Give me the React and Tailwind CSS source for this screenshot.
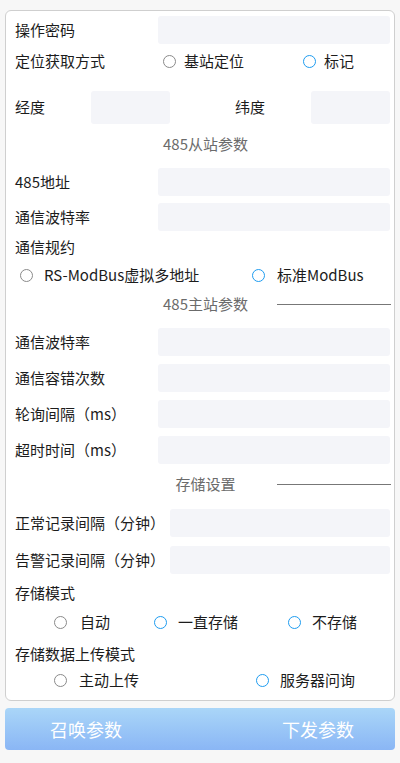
import React from "react";

const font = { fontFamily: '"Noto Sans CJK SC", "Noto Sans", sans-serif' };

function Radio({ blue }) {
  return (
    <span
      className={
        "inline-block w-[13px] h-[13px] rounded-full border bg-white shrink-0 " +
        (blue ? "border-[#1e9cf0]" : "border-[#8a8a8a]")
      }
    />
  );
}

function InputRow({ label, w = "w-[232px]", mt = "mt-[7px]" }) {
  return (
    <div className={"flex items-center justify-between " + mt}>
      <span className="text-[15px] text-[#1c1c1c]">{label}</span>
      <div className={"h-[28px] rounded-[3px] bg-[#f4f5f9] " + w} />
    </div>
  );
}

function Section({ title, line, h = "h-[34px]" }) {
  return (
    <div className={"relative flex items-center justify-center pl-[6px] " + h}>
      <span className="text-[15px] text-[#6b6b6b]">{title}</span>
      {line && (
        <div className="absolute right-[-1px] left-[262px] top-1/2 border-t border-[#777]" />
      )}
    </div>
  );
}

export default function App() {
  return (
    <div className="min-h-[763px] bg-[#f7f7f7] pt-[10px] pb-[13px]" style={font}>
      <div className="mx-[5px] rounded-[6px] border border-[#cfcfcf] bg-white pl-[9px] pr-[4px] pt-[5px] pb-[7px]">
        <InputRow label="操作密码" mt="mt-0" />

        <div className="flex items-center h-[30px] mt-[2px]">
          <span className="text-[15px] text-[#1c1c1c] w-[148px]">定位获取方式</span>
          <div className="flex items-center gap-[8px] w-[140px]">
            <Radio />
            <span className="text-[15px] text-[#1c1c1c]">基站定位</span>
          </div>
          <div className="flex items-center gap-[8px]">
            <Radio blue />
            <span className="text-[15px] text-[#1c1c1c]">标记</span>
          </div>
        </div>

        <div className="flex items-center mt-[15px]">
          <span className="text-[15px] text-[#1c1c1c] w-[76px]">经度</span>
          <div className="h-[33px] w-[79px] rounded-[3px] bg-[#f4f5f9]" />
          <span className="text-[15px] text-[#1c1c1c] ml-[65px] w-[76px]">纬度</span>
          <div className="h-[33px] w-[79px] rounded-[3px] bg-[#f4f5f9]" />
        </div>

        <Section title="485从站参数" h="h-[40px]" />

        <InputRow label="485地址" mt="mt-[4px]" />
        <InputRow label="通信波特率" />

        <div className="flex items-center h-[26px] mt-[3px]">
          <span className="text-[15px] text-[#1c1c1c]">通信规约</span>
        </div>
        <div className="flex items-center h-[30px]">
          <div className="flex items-center gap-[11px] pl-[5px] w-[237px]">
            <Radio />
            <span className="text-[15px] text-[#1c1c1c]">RS-ModBus虚拟多地址</span>
          </div>
          <div className="flex items-center gap-[12px]">
            <Radio blue />
            <span className="text-[15px] text-[#1c1c1c]">标准ModBus</span>
          </div>
        </div>

        <Section title="485主站参数" line h="h-[28px]" />

        <InputRow label="通信波特率" mt="mt-[10px]" />
        <InputRow label="通信容错次数" mt="mt-[8px]" />
        <InputRow label="轮询间隔（ms）" mt="mt-[8px]" />
        <InputRow label="超时时间（ms）" mt="mt-[8px]" />

        <Section title="存储设置" line h="h-[40px]" />

        <InputRow label="正常记录间隔（分钟）" w="w-[220px]" mt="mt-[5px]" />
        <InputRow label="告警记录间隔（分钟）" w="w-[220px]" mt="mt-[9px]" />

        <div className="flex items-center h-[26px] mt-[6px]">
          <span className="text-[15px] text-[#1c1c1c]">存储模式</span>
        </div>
        <div className="flex items-center h-[32px] pl-[39px]">
          <div className="flex items-center gap-[13px] w-[100px]">
            <Radio />
            <span className="text-[15px] text-[#1c1c1c]">自动</span>
          </div>
          <div className="flex items-center gap-[11px] w-[134px]">
            <Radio blue />
            <span className="text-[15px] text-[#1c1c1c]">一直存储</span>
          </div>
          <div className="flex items-center gap-[11px]">
            <Radio blue />
            <span className="text-[15px] text-[#1c1c1c]">不存储</span>
          </div>
        </div>

        <div className="flex items-center h-[26px] mt-[3px]">
          <span className="text-[15px] text-[#1c1c1c]">存储数据上传模式</span>
        </div>
        <div className="flex items-center h-[26px] pl-[39px]">
          <div className="flex items-center gap-[12px] w-[202px]">
            <Radio />
            <span className="text-[15px] text-[#1c1c1c]">主动上传</span>
          </div>
          <div className="flex items-center gap-[11px]">
            <Radio blue />
            <span className="text-[15px] text-[#1c1c1c]">服务器问询</span>
          </div>
        </div>
      </div>

      <div className="mx-[5px] mt-[7px] h-[42px] rounded-[4px] bg-gradient-to-b from-[#aad6f8] to-[#8ab6f5] flex items-center justify-between pl-[45px] pr-[41px]">
        <span className="text-[18px] text-white">召唤参数</span>
        <span className="text-[18px] text-white">下发参数</span>
      </div>
    </div>
  );
}
